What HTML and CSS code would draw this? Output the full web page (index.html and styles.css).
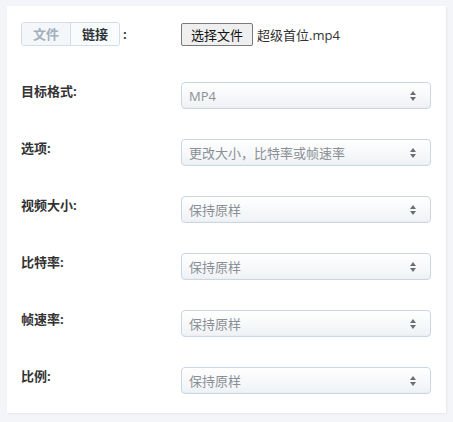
FILE: index.html
```html
<!DOCTYPE html>
<html lang="zh">
<head>
<meta charset="utf-8">
<link rel="stylesheet" href="styles.css">
</head>
<body>
<div class="card">
  <div class="row first">
    <div class="label">
      <div class="tabs">
        <span class="tab active">文件</span><span class="tab">链接</span>
      </div>
      <span class="colon">:</span>
    </div>
    <div class="file">
      <span class="file-btn">选择文件</span>
      <span class="file-name">超级首位.mp4</span>
    </div>
  </div>

  <div class="row">
    <div class="label">目标格式:</div>
    <div class="select"><span>MP4</span><svg class="arrow" width="6" height="10" viewBox="0 0 6 10"><path d="M3 0L6 4H0Z M0 6H6L3 10Z" fill="#6b6f75"/></svg></div>
  </div>
  <div class="row">
    <div class="label">选项:</div>
    <div class="select"><span>更改大小，比特率或帧速率</span><svg class="arrow" width="6" height="10" viewBox="0 0 6 10"><path d="M3 0L6 4H0Z M0 6H6L3 10Z" fill="#6b6f75"/></svg></div>
  </div>
  <div class="row">
    <div class="label">视频大小:</div>
    <div class="select"><span>保持原样</span><svg class="arrow" width="6" height="10" viewBox="0 0 6 10"><path d="M3 0L6 4H0Z M0 6H6L3 10Z" fill="#6b6f75"/></svg></div>
  </div>
  <div class="row">
    <div class="label">比特率:</div>
    <div class="select"><span>保持原样</span><svg class="arrow" width="6" height="10" viewBox="0 0 6 10"><path d="M3 0L6 4H0Z M0 6H6L3 10Z" fill="#6b6f75"/></svg></div>
  </div>
  <div class="row">
    <div class="label">帧速率:</div>
    <div class="select"><span>保持原样</span><svg class="arrow" width="6" height="10" viewBox="0 0 6 10"><path d="M3 0L6 4H0Z M0 6H6L3 10Z" fill="#6b6f75"/></svg></div>
  </div>
  <div class="row">
    <div class="label">比例:</div>
    <div class="select"><span>保持原样</span><svg class="arrow" width="6" height="10" viewBox="0 0 6 10"><path d="M3 0L6 4H0Z M0 6H6L3 10Z" fill="#6b6f75"/></svg></div>
  </div>
</div>
</body>
</html>
```

FILE: styles.css
```css
* { box-sizing: border-box; }
html, body { margin: 0; padding: 0; }
body {
  background: #f4f5f8;
  font-family: "Open Sans", "Noto Sans CJK SC", sans-serif;
  font-size: 13px;
  color: #333;
  width: 453px;
  height: 422px;
  padding: 6px 7px 0 7px;
}
.card {
  width: 439px;
  height: 407px;
  background: #fff;
  box-shadow: 1px 1px 2px rgba(0,0,0,0.06);
  padding: 16px 15px 0 14px;
}
.row {
  display: flex;
  align-items: flex-start;
  height: 27px;
  margin-bottom: 30px;
}
.row.first {
  height: 24px;
  margin-bottom: 36px;
}
.label {
  width: 160px;
  flex: none;
  font-weight: bold;
  line-height: 18px;
  display: flex;
  align-items: center;
}
.tabs {
  display: flex;
  border: 1px solid #d3dde8;
  border-radius: 3px;
  height: 24px;
  overflow: hidden;
}
.tab {
  display: flex;
  align-items: center;
  justify-content: center;
  width: 48px;
  height: 22px;
  background: #fafbfc;
  color: #2d3338;
}
.tab.active {
  width: 49px;
  background: #f4f6f9;
  color: #a3afbd;
  border-right: 1px solid #d3dde8;
}
.colon { margin-left: 3px; }
.file {
  display: flex;
  align-items: center;
  height: 24px;
}
.file-btn {
  display: flex;
  align-items: center;
  justify-content: center;
  width: 72px;
  height: 23px;
  background: #efefef;
  border: 1px solid #7a7a7a;
  border-radius: 2px;
  color: #111;
  font-size: 13px;
}
.file-name {
  margin-left: 4px;
  color: #333;
}
.select {
  width: 250px;
  height: 27px;
  border: 1px solid #c9d7e5;
  border-radius: 4px;
  background: linear-gradient(#ffffff, #eff2f5);
  display: flex;
  align-items: center;
  justify-content: space-between;
  padding: 0 14px 0 7px;
  color: #8b9096;
  box-shadow: inset 0 -1px 1px rgba(0,0,0,0.02);
}
.arrow { flex: none; }
```
